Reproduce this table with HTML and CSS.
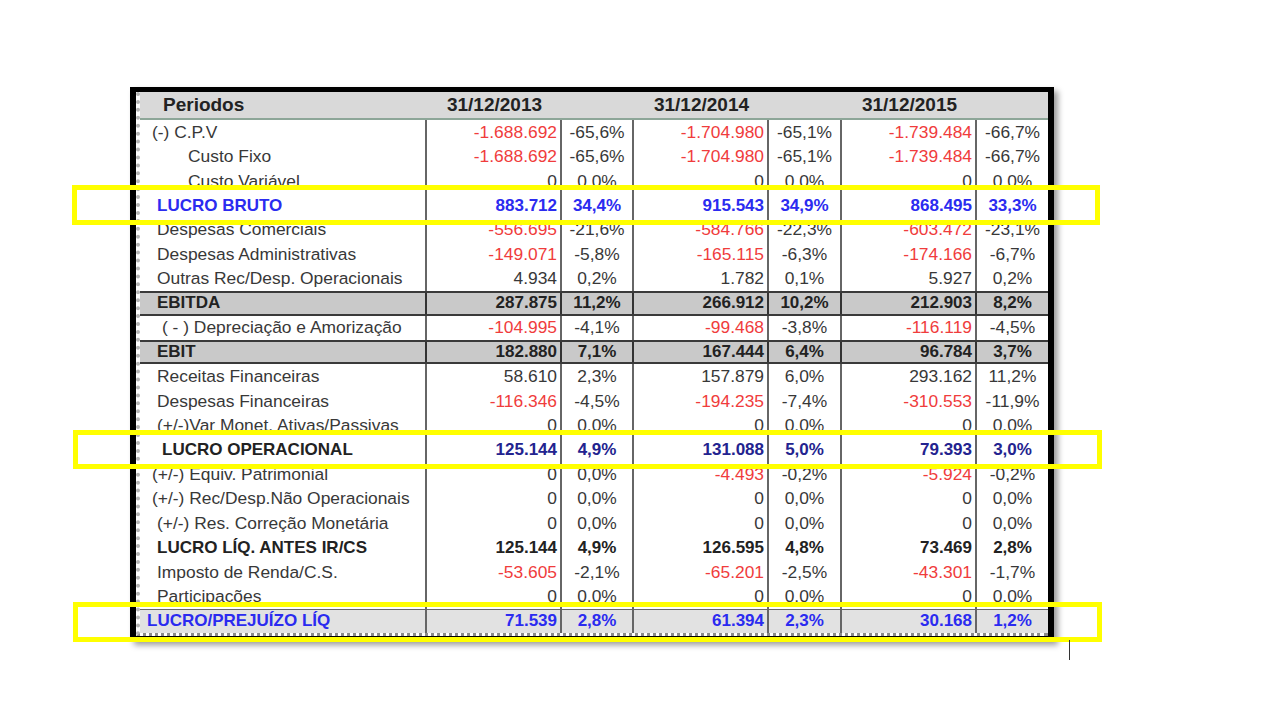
FILE: index.html
```html
<!DOCTYPE html>
<html>
<head>
  <title>DRE</title>
  <link rel="stylesheet" href="styles.css">
</head>
<body>
  <div class="slide">
    <div class="sheet">
      <div class="inner">
        <div class="row head">
          <div class="lbl">Periodos</div>
          <div class="date">31/12/2013</div><div></div>
          <div class="date">31/12/2014</div><div></div>
          <div class="date">31/12/2015</div><div></div>
        </div>

        <div class="row">
          <div class="lbl in-s">(-) C.P.V</div>
          <div class="val neg">-1.688.692</div><div class="pct">-65,6%</div>
          <div class="val neg">-1.704.980</div><div class="pct">-65,1%</div>
          <div class="val neg">-1.739.484</div><div class="pct">-66,7%</div>
        </div>
        <div class="row">
          <div class="lbl in-l">Custo Fixo</div>
          <div class="val neg">-1.688.692</div><div class="pct">-65,6%</div>
          <div class="val neg">-1.704.980</div><div class="pct">-65,1%</div>
          <div class="val neg">-1.739.484</div><div class="pct">-66,7%</div>
        </div>
        <div class="row">
          <div class="lbl in-l">Custo Variável</div>
          <div class="val">0</div><div class="pct">0,0%</div>
          <div class="val">0</div><div class="pct">0,0%</div>
          <div class="val">0</div><div class="pct">0,0%</div>
        </div>
        <div class="row bold blue">
          <div class="lbl">LUCRO BRUTO</div>
          <div class="val">883.712</div><div class="pct">34,4%</div>
          <div class="val">915.543</div><div class="pct">34,9%</div>
          <div class="val">868.495</div><div class="pct">33,3%</div>
        </div>
        <div class="row">
          <div class="lbl">Despesas Comerciais</div>
          <div class="val neg">-556.695</div><div class="pct">-21,6%</div>
          <div class="val neg">-584.766</div><div class="pct">-22,3%</div>
          <div class="val neg">-603.472</div><div class="pct">-23,1%</div>
        </div>
        <div class="row">
          <div class="lbl">Despesas Administrativas</div>
          <div class="val neg">-149.071</div><div class="pct">-5,8%</div>
          <div class="val neg">-165.115</div><div class="pct">-6,3%</div>
          <div class="val neg">-174.166</div><div class="pct">-6,7%</div>
        </div>
        <div class="row">
          <div class="lbl">Outras Rec/Desp. Operacionais</div>
          <div class="val">4.934</div><div class="pct">0,2%</div>
          <div class="val">1.782</div><div class="pct">0,1%</div>
          <div class="val">5.927</div><div class="pct">0,2%</div>
        </div>
        <div class="row bold band">
          <div class="lbl">EBITDA</div>
          <div class="val">287.875</div><div class="pct">11,2%</div>
          <div class="val">266.912</div><div class="pct">10,2%</div>
          <div class="val">212.903</div><div class="pct">8,2%</div>
        </div>
        <div class="row">
          <div class="lbl in-m">( - ) Depreciação e Amorização</div>
          <div class="val neg">-104.995</div><div class="pct">-4,1%</div>
          <div class="val neg">-99.468</div><div class="pct">-3,8%</div>
          <div class="val neg">-116.119</div><div class="pct">-4,5%</div>
        </div>
        <div class="row bold band">
          <div class="lbl">EBIT</div>
          <div class="val">182.880</div><div class="pct">7,1%</div>
          <div class="val">167.444</div><div class="pct">6,4%</div>
          <div class="val">96.784</div><div class="pct">3,7%</div>
        </div>
        <div class="row">
          <div class="lbl">Receitas Financeiras</div>
          <div class="val">58.610</div><div class="pct">2,3%</div>
          <div class="val">157.879</div><div class="pct">6,0%</div>
          <div class="val">293.162</div><div class="pct">11,2%</div>
        </div>
        <div class="row">
          <div class="lbl">Despesas Financeiras</div>
          <div class="val neg">-116.346</div><div class="pct">-4,5%</div>
          <div class="val neg">-194.235</div><div class="pct">-7,4%</div>
          <div class="val neg">-310.553</div><div class="pct">-11,9%</div>
        </div>
        <div class="row">
          <div class="lbl">(+/-)Var Monet. Ativas/Passivas</div>
          <div class="val">0</div><div class="pct">0,0%</div>
          <div class="val">0</div><div class="pct">0,0%</div>
          <div class="val">0</div><div class="pct">0,0%</div>
        </div>
        <div class="row bold navy">
          <div class="lbl in-m">LUCRO OPERACIONAL</div>
          <div class="val">125.144</div><div class="pct">4,9%</div>
          <div class="val">131.088</div><div class="pct">5,0%</div>
          <div class="val">79.393</div><div class="pct">3,0%</div>
        </div>
        <div class="row">
          <div class="lbl in-s">(+/-) Equiv. Patrimonial</div>
          <div class="val">0</div><div class="pct">0,0%</div>
          <div class="val neg">-4.493</div><div class="pct">-0,2%</div>
          <div class="val neg">-5.924</div><div class="pct">-0,2%</div>
        </div>
        <div class="row">
          <div class="lbl in-s">(+/-) Rec/Desp.Não Operacionais</div>
          <div class="val">0</div><div class="pct">0,0%</div>
          <div class="val">0</div><div class="pct">0,0%</div>
          <div class="val">0</div><div class="pct">0,0%</div>
        </div>
        <div class="row">
          <div class="lbl">(+/-) Res. Correção Monetária</div>
          <div class="val">0</div><div class="pct">0,0%</div>
          <div class="val">0</div><div class="pct">0,0%</div>
          <div class="val">0</div><div class="pct">0,0%</div>
        </div>
        <div class="row bold">
          <div class="lbl">LUCRO LÍQ. ANTES IR/CS</div>
          <div class="val">125.144</div><div class="pct">4,9%</div>
          <div class="val">126.595</div><div class="pct">4,8%</div>
          <div class="val">73.469</div><div class="pct">2,8%</div>
        </div>
        <div class="row">
          <div class="lbl">Imposto de Renda/C.S.</div>
          <div class="val neg">-53.605</div><div class="pct">-2,1%</div>
          <div class="val neg">-65.201</div><div class="pct">-2,5%</div>
          <div class="val neg">-43.301</div><div class="pct">-1,7%</div>
        </div>
        <div class="row">
          <div class="lbl">Participações</div>
          <div class="val">0</div><div class="pct">0,0%</div>
          <div class="val">0</div><div class="pct">0,0%</div>
          <div class="val">0</div><div class="pct">0,0%</div>
        </div>
        <div class="row bold blue total">
          <div class="lbl in-xs">LUCRO/PREJUÍZO LÍQ</div>
          <div class="val">71.539</div><div class="pct">2,8%</div>
          <div class="val">61.394</div><div class="pct">2,3%</div>
          <div class="val">30.168</div><div class="pct">1,2%</div>
        </div>
      </div>
    </div>

    <!-- highlight boxes drawn over the sheet -->
    <div class="mark mark-bruto"></div>
    <div class="mark mark-oper"></div>
    <div class="mark mark-liq"></div>
    <div class="tick"></div>
  </div>
</body>
</html>
```

FILE: styles.css
```css
/* slide with the income statement table */
body {
  margin: 0;
  background-color: #fff;
  font-family: "Liberation Sans", Arial, sans-serif;
}

.slide {
  position: relative;
  width: 1280px;
  height: 720px;
  padding: 87px 0 0 130px;
  box-sizing: border-box;
}

.sheet {
  width: 924px;
  box-sizing: border-box;
  border: 6px solid #000;
  border-top-width: 5px;
  border-bottom-width: 5px;
  box-shadow: 4px 4px 6px rgba(0, 0, 0, 0.4);
}

.inner {
  border-left: 4px dotted #b4b4b4;
  border-bottom: 3px dotted #8a8a8a;
}

.row {
  display: grid;
  grid-template-columns: 287px 135px 72px 135px 73px 135px 71px;
  height: 24.45px;
  font-size: 17.4px;
  color: #383838;
}

.row > div {
  display: flex;
  align-items: center;
  box-sizing: border-box;
  border-right: 2px solid #666;
  white-space: nowrap;
  overflow: hidden;
}

.row > div:last-child {
  border-right: none;
}

.lbl {
  padding-left: 17px;
}

.in-xs { padding-left: 7px; }
.in-s { padding-left: 12px; }
.in-m { padding-left: 22px; }
.in-l { padding-left: 48px; }

.val {
  justify-content: flex-end;
  padding-right: 3px;
}

.pct {
  justify-content: center;
}

.neg {
  color: #f03c3c;
}

/* header */
.row.head {
  height: 26px;
  background-color: #d9d9d9;
  border-bottom: 2px solid #8da698;
  font-size: 19px;
  font-weight: bold;
  color: #222;
}

.row.head > div {
  border-right: none;
}

.row.head .lbl {
  padding-left: 23px;
}

.row.head .date {
  justify-content: center;
}

/* emphasis rows */
.bold {
  font-weight: bold;
  font-size: 17px;
  color: #222;
}

.blue {
  color: #2b2bf0;
}

.navy {
  color: #222;
}

.navy .val,
.navy .pct {
  color: #23238f;
}

.band {
  background-color: #c9c9c9;
  border-top: 2px solid #3a3a3a;
  border-bottom: 2px solid #3a3a3a;
  box-sizing: border-box;
}

.band > div {
  border-right-color: #333;
}

.total {
  background-color: #e2e2e2;
  border-top: 1px solid #666;
  box-sizing: border-box;
}

/* yellow highlight frames */
.mark {
  position: absolute;
  border: 5px solid #ffff00;
  box-sizing: border-box;
}

.mark-bruto {
  left: 72px;
  top: 185px;
  width: 1028px;
  height: 40px;
}

.mark-oper {
  left: 73px;
  top: 430px;
  width: 1029px;
  height: 39px;
}

.mark-liq {
  left: 73px;
  top: 602px;
  width: 1029px;
  height: 40px;
}

.tick {
  position: absolute;
  left: 1069px;
  top: 640px;
  width: 1px;
  height: 20px;
  background-color: #333;
}
```
